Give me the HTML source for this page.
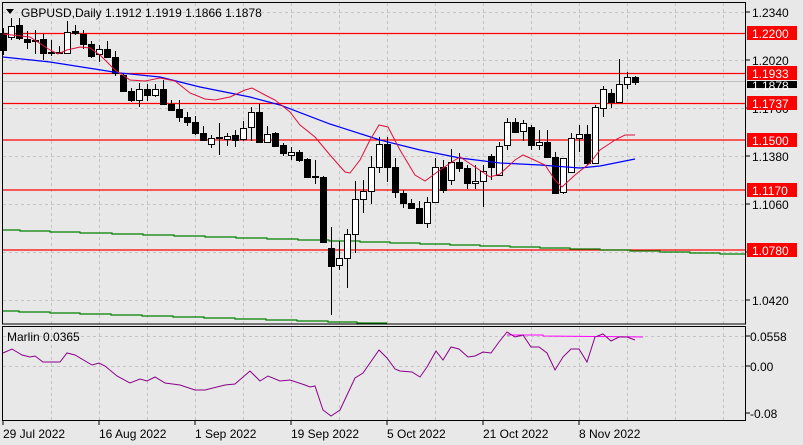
<!DOCTYPE html>
<html><head><meta charset="utf-8"><style>
html,body{margin:0;padding:0;background:#e8e8e8;}
svg{display:block;font-family:"Liberation Sans",sans-serif;}
</style></head><body>
<svg id="s" width="803" height="445" viewBox="0 0 803 445" xmlns="http://www.w3.org/2000/svg">
<rect width="803" height="445" fill="#e8e8e8"/>
<g id="grid" stroke="#c4c4c4" stroke-dasharray="3,3" stroke-width="1"></g>
<!-- horizontal levels -->
<g stroke="#ff0000" stroke-width="1.3">
<line x1="3" y1="33.5" x2="746" y2="33.5"/>
<line x1="3" y1="73.5" x2="746" y2="73.5"/>
<line x1="3" y1="103.5" x2="746" y2="103.5"/>
<line x1="3" y1="140" x2="746" y2="140"/>
<line x1="3" y1="190" x2="746" y2="190"/>
<line x1="3" y1="250" x2="746" y2="250"/>
</g>
<line x1="3" y1="81.5" x2="746" y2="81.5" stroke="#c0c0c0"/>
<polyline fill="none" stroke="#008000" stroke-width="1.2" points="3,230 20,230 20,231 50,231 50,232 80,232 80,233 112,233 112,234 143,234 143,235 174,235 174,236 205,236 205,237 236,237 236,238 267,238 267,239 298,239 298,240 329,240 329,241 360,241 360,242 390,242 390,243 420,243 420,244 450,244 450,245 480,245 480,246 510,246 510,247 540,247 540,248 570,248 570,249 600,249 600,250 630,250 630,251 660,251 660,252 690,252 690,253 720,253 720,254 746,254"/>
<polyline fill="none" stroke="#008000" stroke-width="1.2" points="3,311 19,311 19,312 50,312 50,313 80,313 80,314 111,314 111,315 142,315 142,316 173,316 173,317 204,317 204,318 235,318 235,319 266,319 266,320 297,320 297,321 328,321 328,322 357,322 357,323 387,323"/>
<g id="cndl"></g>
<polyline fill="none" stroke="#0000ff" stroke-width="1.2" points="3,57 50,62 120,73 160,77 200,87 250,97 280,105 330,124 380,140 420,150 460,158 500,163 540,165 580,168 600,166 620,162 635,159"/>
<polyline fill="none" stroke="#e0103a" stroke-width="1" points="3,34 30,37 50,50 58,54 67,50 80,47 90,48 100,55 115,70 130,80 145,81 160,78 175,81 190,93 205,99 215,100 230,97 245,90 252,88 265,95 275,100 290,112 300,125 315,137 330,155 345,172 350,173 360,160 370,140 379,125 388,127 400,150 415,175 425,181 440,170 455,160 460,157 475,167 490,177 500,174 515,160 523,155 530,158 545,165 555,180 562,187 575,175 590,163 600,150 615,140 625,135 635,135"/>
<!-- frames -->
<rect x="2.5" y="2.5" width="743" height="321.5" fill="none" stroke="#000"/>
<rect x="2.5" y="326.5" width="743" height="94" fill="none" stroke="#000"/>
<!-- oscillator -->
<polyline fill="none" stroke="#ff00ff" stroke-width="1" points="507,335 543,335 543,336 643,337"/>
<polyline fill="none" stroke="#8b008b" stroke-width="1" points="3,353 12,349 22,355 30,357 35,356 43,362 60,362 67,353 75,355 92,365 99,363 105,366 117,376 130,383 140,379 147,381 155,377 165,383 180,385 195,390 205,390 225,385 235,384 250,371 260,381 268,376 280,381 290,380 305,385 310,387 315,386 323,410 331,416 340,410 355,378 363,373 379,350 387,358 395,369 400,371 412,372 420,377 427,367 436,351 443,360 451,347 459,349 468,357 475,356 483,352 491,353 499,342 507,332 515,337 523,335 531,347 539,347 547,353 555,370 563,357 571,349 579,349 587,362 595,337 603,334 611,341 619,337 627,337 635,340"/>
<text x="7" y="341" font-size="12" fill="#000">Marlin 0.0365</text>
<!-- title -->
<path d="M6,9 L14,9 L10,14 Z" fill="#000"/>
<text x="21" y="17" font-size="12" fill="#000">GBPUSD,Daily  1.1912 1.1919 1.1866 1.1878</text>
<!-- right axis -->
<g stroke="#000"><line x1="746" y1="12" x2="750" y2="12"/><line x1="746" y1="60" x2="750" y2="60"/><line x1="746" y1="108" x2="750" y2="108"/><line x1="746" y1="156" x2="750" y2="156"/><line x1="746" y1="204" x2="750" y2="204"/><line x1="746" y1="252" x2="750" y2="252"/><line x1="746" y1="300" x2="750" y2="300"/><line x1="746" y1="336" x2="750" y2="336"/><line x1="746" y1="366" x2="750" y2="366"/><line x1="746" y1="413" x2="750" y2="413"/></g>
<g font-size="12" fill="#000">
<text x="752" y="17">1.2340</text><text x="752" y="65">1.2020</text><text x="752" y="113">1.1700</text><text x="752" y="161">1.1380</text><text x="752" y="209">1.1060</text><text x="752" y="257">1.0740</text><text x="752" y="305">1.0420</text>
<text x="750" y="341">0.0558</text><text x="750" y="371">0.00</text><text x="750" y="418">-0.08</text>
</g>
<rect x="747" y="81" width="50" height="7" fill="#000"/>
<text x="752" y="90" font-size="12" fill="#fff">1.1878</text>
<g fill="#ff0000"><rect x="747" y="26" width="50" height="14"/><rect x="747" y="66" width="50" height="14"/><rect x="747" y="96" width="50" height="14"/><rect x="747" y="133" width="50" height="14"/><rect x="747" y="183" width="50" height="14"/><rect x="747" y="243" width="50" height="14"/></g>
<g font-size="12" fill="#fff"><text x="752" y="38">1.2200</text><text x="752" y="78">1.1933</text><text x="752" y="108">1.1737</text><text x="752" y="145">1.1500</text><text x="752" y="195">1.1170</text><text x="752" y="255">1.0780</text></g>
<!-- time axis -->
<g stroke="#000"><line x1="3" y1="421" x2="3" y2="425"/><line x1="99" y1="421" x2="99" y2="425"/><line x1="195" y1="421" x2="195" y2="425"/><line x1="291" y1="421" x2="291" y2="425"/><line x1="387" y1="421" x2="387" y2="425"/><line x1="483" y1="421" x2="483" y2="425"/><line x1="579" y1="421" x2="579" y2="425"/></g>
<g font-size="12" fill="#000"><text x="3" y="438">29 Jul 2022</text><text x="99" y="438">16 Aug 2022</text><text x="195" y="438">1 Sep 2022</text><text x="291" y="438">19 Sep 2022</text><text x="387" y="438">5 Oct 2022</text><text x="483" y="438">21 Oct 2022</text><text x="579" y="438">8 Nov 2022</text></g>
</svg>
<script>
var NS="http://www.w3.org/2000/svg";
var g=document.getElementById('grid');
function ln(p,a){var e=document.createElementNS(NS,'line');for(var k in a)e.setAttribute(k,a[k]);p.appendChild(e);}
for(var x=51;x<746;x+=48){ln(g,{x1:x+.5,y1:3,x2:x+.5,y2:324});ln(g,{x1:x+.5,y1:327,x2:x+.5,y2:420});}
[12,60,108,156,204,252,300].forEach(function(y){ln(g,{x1:3,y1:y+.5,x2:746,y2:y+.5});});
[336,366].forEach(function(y){ln(g,{x1:3,y1:y+.5,x2:746,y2:y+.5});});
// [x, open, close, high, low] in px
var C=[[3,33,50,28,55],[11,37,26,18,40],[19,25,38,18,40],[27,39,42,31,49],[35,40,40,30,54],[43,39,53,34,60],[51,52,53,40,56],[59,52,53,46,54],[67,53,32,21,53],[75,31,33,25,35],[83,34,44,30,49],[91,44,56,41,58],[99,54,49,45,62],[107,49,57,41,58],[115,57,73,51,76],[123,75,91,74,92],[131,91,100,88,102],[139,100,89,83,107],[147,89,95,84,101],[155,95,89,84,97],[163,89,104,80,105],[171,104,110,100,111],[179,109,117,100,122],[187,117,122,112,126],[195,122,133,116,135],[203,133,140,126,141],[211,144,138,135,148],[219,137,138,123,155],[227,139,136,133,146],[235,135,140,130,147],[243,139,128,121,141],[251,127,112,107,141],[259,112,142,104,143],[267,142,134,126,143],[275,133,146,132,147],[283,145,153,143,156],[291,155,152,147,160],[299,152,160,150,162],[307,159,177,158,178],[315,176,177,160,184],[323,177,242,176,243],[331,248,266,227,315],[339,265,258,241,270],[347,258,234,229,288],[355,234,199,181,253],[363,199,191,180,213],[371,191,167,156,204],[379,167,144,137,173],[387,144,167,137,182],[395,167,192,158,198],[403,193,203,190,208],[411,203,208,199,209],[419,208,223,201,224],[427,223,202,197,228],[435,202,167,158,202],[443,167,190,160,193],[451,180,162,149,185],[459,162,168,153,172],[467,168,183,165,189],[475,183,181,165,189],[483,181,171,165,207],[491,156,167,154,180],[499,175,146,142,176],[507,145,122,118,150],[515,122,132,118,133],[523,131,123,120,141],[531,127,145,125,150],[539,145,142,130,150],[547,142,157,130,158],[555,157,193,152,194],[563,192,158,158,194],[571,172,138,133,172],[579,138,134,125,152],[587,134,163,125,165],[595,163,107,105,163],[603,108,89,86,117],[611,93,102,89,108],[619,102,84,59,103],[627,84,77,72,89],[635,77,82,76,85]];
var cg=document.getElementById('cndl');
C.forEach(function(c){var x=c[0]+.5;ln(cg,{x1:x,y1:c[3],x2:x,y2:c[4],stroke:'#000'});
var t=Math.min(c[1],c[2]),b=Math.max(c[1],c[2]);var bull=c[2]<c[1];
var r=document.createElementNS(NS,'rect');r.setAttribute('x',c[0]-2.5);r.setAttribute('y',t+.5);r.setAttribute('width',6);r.setAttribute('height',Math.max(b-t,1));
r.setAttribute('fill',bull?'#fff':'#000');r.setAttribute('stroke','#000');cg.appendChild(r);});
</script>
</body></html>
